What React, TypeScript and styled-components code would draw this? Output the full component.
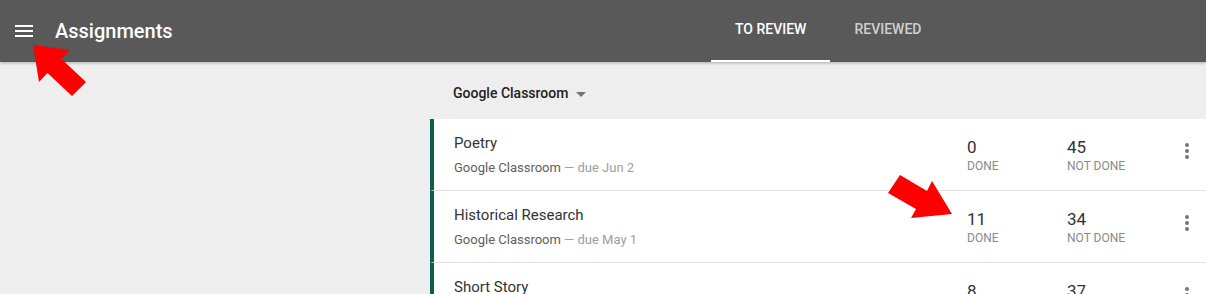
import React from "react";
import styled, { createGlobalStyle } from "styled-components";

const GlobalStyle = createGlobalStyle`
  html, body {
    margin: 0;
    padding: 0;
    overflow: hidden;
    background: #eeeeee;
    font-family: Roboto, "Noto Sans", Arial, sans-serif;
  }
  * { box-sizing: border-box; }
`;

const Page = styled.div`
  position: relative;
  width: 1206px;
  height: 294px;
  overflow: hidden;
  background: #eeeeee;
`;

const Header = styled.header`
  position: relative;
  z-index: 1;
  height: 62px;
  display: flex;
  align-items: stretch;
  background: #595959;
  box-shadow: 0 1px 3px rgba(0, 0, 0, 0.28);
`;

const Brand = styled.div`
  width: 711px;
  display: flex;
  align-items: center;
  padding-left: 12px;
`;

const MenuButton = styled.button`
  width: 24px;
  height: 24px;
  padding: 0;
  border: 0;
  background: none;
  color: #ffffff;
  display: flex;
`;

const Title = styled.h1`
  margin: 0 0 0 19px;
  font-size: 20px;
  font-weight: 500;
  color: #ffffff;
`;

const Tabs = styled.nav`
  display: flex;
  align-items: stretch;
`;

const Tab = styled.div<{ $active?: boolean }>`
  display: flex;
  align-items: center;
  justify-content: center;
  padding: 0 24px 4px;
  font-size: 14px;
  font-weight: 500;
  text-transform: uppercase;
  color: ${(p) => (p.$active ? "#ffffff" : "rgba(255,255,255,0.72)")};
  box-shadow: ${(p) => (p.$active ? "inset 0 -2px 0 #ffffff" : "none")};
`;

const Main = styled.main`
  display: grid;
  grid-template-columns: 430px 1fr;
`;

const Sidebar = styled.aside``;

const Content = styled.section`
  display: flex;
  flex-direction: column;
`;

const FilterBar = styled.div`
  height: 57px;
  display: flex;
  align-items: center;
  padding: 5px 0 0 23px;
`;

const FilterLabel = styled.span`
  font-size: 14px;
  font-weight: 500;
  color: #212121;
`;

const Caret = styled.span`
  width: 0;
  height: 0;
  margin-left: 8px;
  margin-top: 2px;
  border-left: 5px solid transparent;
  border-right: 5px solid transparent;
  border-top: 5px solid #757575;
`;

const List = styled.div`
  display: flex;
  flex-direction: column;
  background: #ffffff;
`;

const Row = styled.div`
  height: 72px;
  display: flex;
  align-items: center;
  padding-left: 20px;
  border-left: 4px solid #0b5f50;
  border-bottom: 1px solid #e0e0e0;
  background: #ffffff;
`;

const Info = styled.div`
  flex: 1;
  display: flex;
  flex-direction: column;
`;

const RowTitle = styled.div`
  font-size: 15px;
  line-height: 20px;
  color: #333333;
  margin-bottom: 6px;
`;

const RowSub = styled.div`
  font-size: 13px;
  line-height: 18px;
  color: #616161;
`;

const Due = styled.span`
  color: #9e9e9e;
`;

const Stat = styled.div`
  width: 100px;
  display: flex;
  flex-direction: column;
`;

const StatNumber = styled.div`
  font-size: 17px;
  line-height: 20px;
  color: #333333;
  margin-bottom: 2px;
`;

const StatLabel = styled.div`
  font-size: 12px;
  line-height: 14px;
  color: #8a8a8a;
  text-transform: uppercase;
`;

const MoreButton = styled.button`
  width: 39px;
  height: 100%;
  padding: 0 0 7px;
  border: 0;
  background: none;
  display: flex;
  flex-direction: column;
  align-items: center;
  justify-content: center;
  gap: 2px;
`;

const Dot = styled.span`
  width: 4px;
  height: 4px;
  border-radius: 50%;
  background: #757575;
`;

const Overlay = styled.svg`
  position: absolute;
  left: 0;
  top: 0;
  z-index: 5;
  pointer-events: none;
`;

const MenuIcon = () => (
  <svg width="24" height="24" viewBox="0 0 24 24" fill="currentColor">
    <path d="M3 18h18v-2H3v2zm0-5h18v-2H3v2zm0-7v2h18V6H3z" />
  </svg>
);

const assignments = [
  { title: "Poetry", due: "due Jun 2", done: 0, notDone: 45 },
  { title: "Historical Research", due: "due May 1", done: 11, notDone: 34 },
  { title: "Short Story", due: "due Apr 14", done: 8, notDone: 37 },
];

export default function App() {
  return (
    <Page>
      <GlobalStyle />
      <Header>
        <Brand>
          <MenuButton aria-label="Menu">
            <MenuIcon />
          </MenuButton>
          <Title>Assignments</Title>
        </Brand>
        <Tabs>
          <Tab $active>To review</Tab>
          <Tab>Reviewed</Tab>
        </Tabs>
      </Header>
      <Main>
        <Sidebar />
        <Content>
          <FilterBar>
            <FilterLabel>Google Classroom</FilterLabel>
            <Caret />
          </FilterBar>
          <List>
            {assignments.map((a) => (
              <Row key={a.title}>
                <Info>
                  <RowTitle>{a.title}</RowTitle>
                  <RowSub>
                    Google Classroom <Due>— {a.due}</Due>
                  </RowSub>
                </Info>
                <Stat>
                  <StatNumber>{a.done}</StatNumber>
                  <StatLabel>Done</StatLabel>
                </Stat>
                <Stat>
                  <StatNumber>{a.notDone}</StatNumber>
                  <StatLabel>Not done</StatLabel>
                </Stat>
                <MoreButton aria-label="More">
                  <Dot />
                  <Dot />
                  <Dot />
                </MoreButton>
              </Row>
            ))}
          </List>
        </Content>
      </Main>
      <Overlay width="1206" height="294" viewBox="0 0 1206 294">
        <polygon
          points="33,45 70,50 61.5,59 86,82 72,96 47.5,73 39,82"
          fill="#ff0000"
        />
        <polygon
          points="900,175 927,191 932,181 952,214 911,218 916,209 888,193"
          fill="#ff0000"
        />
      </Overlay>
    </Page>
  );
}
